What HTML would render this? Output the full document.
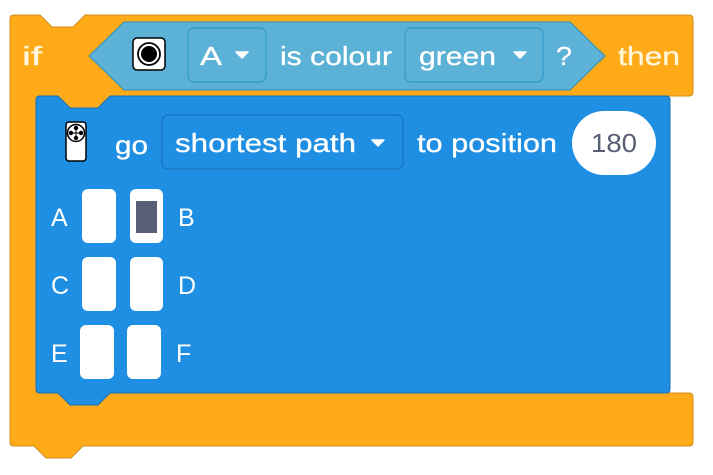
<!DOCTYPE html>
<html><head><style>
body{margin:0;background:#fff;width:713px;height:475px;overflow:hidden;font-family:"Liberation Sans",sans-serif}
svg{display:block}
</style></head><body>
<svg width="713" height="475" viewBox="0 0 713 475" xmlns="http://www.w3.org/2000/svg">
<path d="M14 15 H40 L52 27 H73 L85 15 H689 Q693 15 693 19 V92 Q693 96 689 96 H110 L98 108 H70 L58 96 H40 Q36 96 36 100 V389 Q36 393 40 393 H58 L70 405 H98 L110 393 H689 Q693 393 693 397 V442 Q693 446 689 446 H83 L71 458 H46 L34 446 H14 Q10 446 10 442 V19 Q10 15 14 15 Z" fill="#FFAB19" stroke="#CF8B17" stroke-width="1"/>
<path d="M40 96 H58 L70 108 H98 L110 96 H666 Q670 96 670 100 V389 Q670 393 666 393 H110 L98 405 H70 L58 393 H40 Q36 393 36 389 V100 Q36 96 40 96 Z" fill="#1F8FE3" stroke="#1a6fae" stroke-width="1"/>
<path d="M124 22 H570 L605 56 L570 90 H124 L89 56 Z" fill="#5CB1D6" stroke="#2E8EB8" stroke-width="1"/>
<rect x="133" y="38" width="32" height="32" rx="4" fill="#fff" stroke="#000" stroke-width="1.5"/>
<circle cx="149" cy="54" r="11" fill="none" stroke="#000" stroke-width="1.8"/>
<circle cx="149" cy="54" r="8" fill="#000"/>
<rect x="188" y="28" width="78" height="54" rx="6" fill="#5CB1D6" stroke="#2E9CC8" stroke-width="1.2"/>
<path d="M236 52 h12 l-6 6 z" fill="#fff" stroke="#fff" stroke-width="1.5" stroke-linejoin="round"/>
<rect x="405" y="28" width="138" height="54" rx="6" fill="#5CB1D6" stroke="#2E9CC8" stroke-width="1.2"/>
<path d="M514 52 h12 l-6 6 z" fill="#fff" stroke="#fff" stroke-width="1.5" stroke-linejoin="round"/>
<rect x="162" y="115" width="241" height="54" rx="6" fill="#1F8FE3" stroke="#1873BD" stroke-width="1.2"/>
<path d="M372 140 h12 l-6 6 z" fill="#fff" stroke="#fff" stroke-width="1.5" stroke-linejoin="round"/>
<g font-size="26" stroke-width="0.3">
<text x="22" y="65" fill="#FFF6DC" stroke="#FFF6DC" textLength="20" lengthAdjust="spacingAndGlyphs">if</text>
<text x="618" y="65" fill="#FFF6DC" stroke="#FFF6DC" textLength="62" lengthAdjust="spacingAndGlyphs">then</text>
</g>
<g fill="#fff" stroke="#fff" stroke-width="0.3" font-size="26">
<text x="200" y="65" textLength="22" lengthAdjust="spacingAndGlyphs">A</text>
<text x="280" y="65" textLength="112" lengthAdjust="spacingAndGlyphs">is colour</text>
<text x="419" y="65" textLength="77" lengthAdjust="spacingAndGlyphs">green</text>
<text x="556" y="65" textLength="16" lengthAdjust="spacingAndGlyphs">?</text>
<text x="115" y="154" textLength="33" lengthAdjust="spacingAndGlyphs">go</text>
<text x="175" y="152" textLength="181" lengthAdjust="spacingAndGlyphs">shortest path</text>
<text x="417" y="152" textLength="140" lengthAdjust="spacingAndGlyphs">to position</text>
</g>
<rect x="66" y="122" width="20" height="39" rx="3" fill="#fff" stroke="#000" stroke-width="1.5"/>
<circle cx="76" cy="133" r="8.5" fill="#fff" stroke="#000" stroke-width="1.5"/>
<circle cx="76" cy="128" r="2.2" fill="#000"/><circle cx="76" cy="138" r="2.2" fill="#000"/>
<circle cx="71" cy="133" r="2.2" fill="#000"/><circle cx="81" cy="133" r="2.2" fill="#000"/>
<path d="M72 133h8M76 129v8" stroke="#000" stroke-width="1"/>
<rect x="572" y="111" width="84" height="64" rx="32" fill="#fff"/>
<text x="614" y="152" fill="#575E75" font-size="26" text-anchor="middle" textLength="46" lengthAdjust="spacingAndGlyphs">180</text>
<g fill="#fff" font-size="25">
<text x="51" y="226">A</text><text x="178" y="226">B</text>
<text x="51" y="294">C</text><text x="178" y="294">D</text>
<text x="51" y="362">E</text><text x="176" y="362">F</text>
</g>
<g fill="#fff">
<rect x="82" y="189" width="34" height="54" rx="6"/>
<rect x="130" y="189" width="33" height="54" rx="6"/>
<rect x="82" y="257" width="34" height="54" rx="6"/>
<rect x="130" y="257" width="33" height="54" rx="6"/>
<rect x="80" y="325" width="34" height="54" rx="6"/>
<rect x="127" y="325" width="34" height="54" rx="6"/>
</g>
<rect x="136" y="201" width="21" height="32" fill="#575E75"/>
</svg>
</body></html>
